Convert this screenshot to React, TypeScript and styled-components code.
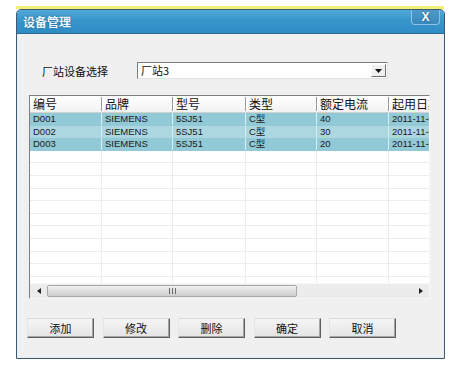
import styled, { createGlobalStyle } from 'styled-components'

const CJK = '"Noto Sans CJK SC", "Liberation Sans", sans-serif'
const LATIN = '"Liberation Sans", "Noto Sans CJK SC", sans-serif'

const GlobalStyle = createGlobalStyle`
  body {
    margin: 0;
    background: #fff;
    font-family: ${LATIN};
  }
`

const Page = styled.div`
  width: 462px;
  height: 369px;
  box-sizing: border-box;
  padding: 6px 0 0 16px;
`

const Highlight = styled.div`
  width: 428px;
  height: 3px;
  background: #f3f175;
`

const Window = styled.div`
  width: 429px;
  height: 350px;
  box-sizing: border-box;
  border: 1px solid #3f5a70;
  border-radius: 5px 5px 0 0;
  background: #f0f0f0;
  display: flex;
  flex-direction: column;
  overflow: hidden;
`

const TitleBar = styled.div`
  height: 23px;
  flex: none;
  display: flex;
  align-items: flex-start;
  justify-content: space-between;
  padding: 0 4px 0 6px;
  background: linear-gradient(180deg, #52a8d9 0%, #3896cc 45%, #2f8cc5 100%);
  border-bottom: 1px solid #2a6a94;
`

const Title = styled.span`
  font-family: ${CJK};
  font-size: 12px;
  font-weight: bold;
  line-height: 23px;
  color: #eef7fd;
  text-shadow: 0 0 2px #1d5f8a;
`

const CloseButton = styled.div`
  width: 29px;
  height: 15px;
  box-sizing: border-box;
  border: 1px solid #8cc3e4;
  border-top: none;
  border-radius: 0 0 4px 4px;
  background: linear-gradient(180deg, #4d9bcb, #3a88bb);
  color: #fff;
  font-family: ${LATIN};
  font-weight: bold;
  font-size: 12px;
  line-height: 14px;
  text-align: center;
  text-shadow: 0 0 2px #1c4f73;
`

const Body = styled.div`
  flex: 1;
  display: flex;
  flex-direction: column;
  border: 1px solid #e4eef5;
  border-top: none;
`

const FilterRow = styled.div`
  display: flex;
  align-items: center;
  padding: 28px 0 0 24px;
`

const FilterLabel = styled.span`
  font-family: ${CJK};
  font-size: 11px;
  width: 95px;
  color: #111;
`

const Combo = styled.div`
  width: 251px;
  height: 17px;
  box-sizing: border-box;
  display: flex;
  align-items: stretch;
  background: #fff;
  border: 1px solid;
  border-color: #7c7c7c #e2e2e2 #e2e2e2 #7c7c7c;
`

const ComboText = styled.span`
  flex: 1;
  font-family: ${CJK};
  font-size: 11px;
  line-height: 15px;
  padding-left: 3px;
  color: #111;
`

const ComboButton = styled.div`
  width: 15px;
  box-sizing: border-box;
  margin: 1px;
  display: flex;
  align-items: center;
  justify-content: center;
  background: #f0f0f0;
  border: 1px solid;
  border-color: #fff #6d6d6d #6d6d6d #fff;
`

const Table = styled.div`
  margin: 16px 0 0 11px;
  width: 401px;
  height: 204px;
  box-sizing: border-box;
  border: 1px solid;
  border-color: #7e7e7e #f8f8f8 #f8f8f8 #7e7e7e;
  display: flex;
  flex-direction: column;
  overflow: hidden;
  background: #fff;
`

const GridRow = styled.div<{ $bg?: string; $height: number }>`
  display: grid;
  grid-template-columns: 72px 71px 73px 71px 72px 72px;
  height: ${(p) => p.$height}px;
  flex: none;
  background: ${(p) => p.$bg || '#fff'};
  border-bottom: 1px solid ${(p) => (p.$bg ? p.$bg : '#ececec')};
  box-sizing: border-box;
`

const HeaderRow = styled(GridRow)`
  background: linear-gradient(180deg, #ffffff, #f2f2f2);
  border-bottom: 1px solid #d2d2d2;
`

const HeaderCell = styled.div`
  font-family: ${CJK};
  font-size: 12px;
  line-height: 14px;
  padding-left: 3px;
  color: #111;
  white-space: nowrap;
  border-right: 1px solid #9a9a9a;
  box-shadow: 1px 0 0 #fff;
  margin: 1px 0;
`

const Cell = styled.div<{ $line: string }>`
  font-family: ${LATIN}, ${CJK};
  font-size: 9.5px;
  line-height: 12px;
  padding-left: 3px;
  color: #1a1a1a;
  white-space: nowrap;
  overflow: hidden;
  border-right: 1px solid ${(p) => p.$line};
`

const RowsArea = styled.div`
  flex: 1;
  overflow: hidden;
  display: flex;
  flex-direction: column;
`

const ScrollBar = styled.div`
  height: 14px;
  flex: none;
  display: flex;
  align-items: center;
  background: #ececec;
  border-top: 1px solid #f8f8f8;
`

const ScrollArrow = styled.div`
  width: 17px;
  height: 14px;
  display: flex;
  align-items: center;
  justify-content: center;
`

const Thumb = styled.div`
  width: 250px;
  height: 12px;
  box-sizing: border-box;
  border: 1px solid #a9a9a9;
  border-radius: 2px;
  background: linear-gradient(180deg, #f0f0f0 0%, #dedede 50%, #cdcdcd 100%);
  display: flex;
  align-items: center;
  justify-content: center;
`

const Track = styled.div`
  flex: 1;
`

const ButtonRow = styled.div`
  display: flex;
  gap: 8.5px;
  padding: 19px 0 0 9px;
`

const Button = styled.button`
  width: 67px;
  height: 20px;
  padding: 0;
  box-sizing: border-box;
  font-family: ${CJK};
  font-size: 11px;
  color: #111;
  background: linear-gradient(180deg, #f5f5f5, #e4e4e4);
  border: 1px solid;
  border-color: #dadada #5f5f5f #5f5f5f #e6e6e6;
  box-shadow: inset -1px -1px 0 #a5a5a5;
`

const columns = ['编号', '品牌', '型号', '类型', '额定电流', '起用日期']

const records = [
  ['D001', 'SIEMENS', '5SJ51', 'C型', '40', '2011-11-01'],
  ['D002', 'SIEMENS', '5SJ51', 'C型', '30', '2011-11-01'],
  ['D003', 'SIEMENS', '5SJ51', 'C型', '20', '2011-11-01'],
]

const rowColors = ['#92c9d6', '#acd7e1', '#92c9d6']

const emptyRows = Array.from({ length: 12 }, (_, i) => i)

const buttons = ['添加', '修改', '删除', '确定', '取消']

export default function App() {
  return (
    <Page>
      <GlobalStyle />
      <Highlight />
      <Window>
        <TitleBar>
          <Title>设备管理</Title>
          <CloseButton>X</CloseButton>
        </TitleBar>
        <Body>
          <FilterRow>
            <FilterLabel>厂站设备选择</FilterLabel>
            <Combo>
              <ComboText>厂站3</ComboText>
              <ComboButton>
                <svg width="7" height="4" viewBox="0 0 7 4">
                  <path d="M0 0h7L3.5 4z" fill="#111" />
                </svg>
              </ComboButton>
            </Combo>
          </FilterRow>

          <Table>
            <HeaderRow $height={17}>
              {columns.map((c) => (
                <HeaderCell key={c}>{c}</HeaderCell>
              ))}
            </HeaderRow>
            <RowsArea>
              {records.map((r, i) => (
                <GridRow key={r[0]} $height={12.6} $bg={rowColors[i]}>
                  {r.map((v, j) => (
                    <Cell key={j} $line="#d9eef3">
                      {v}
                    </Cell>
                  ))}
                </GridRow>
              ))}
              {emptyRows.map((i) => (
                <GridRow key={i} $height={12.6}>
                  {columns.map((c) => (
                    <Cell key={c} $line="#ececec" />
                  ))}
                </GridRow>
              ))}
            </RowsArea>
            <ScrollBar>
              <ScrollArrow>
                <svg width="4" height="6" viewBox="0 0 4 6">
                  <path d="M4 0v6L0 3z" fill="#222" />
                </svg>
              </ScrollArrow>
              <Thumb>
                <svg width="7" height="6" viewBox="0 0 7 6">
                  <path d="M0.5 0v6M3.5 0v6M6.5 0v6" stroke="#6a6a6a" strokeWidth="1" />
                </svg>
              </Thumb>
              <Track />
              <ScrollArrow>
                <svg width="4" height="6" viewBox="0 0 4 6">
                  <path d="M0 0v6L4 3z" fill="#222" />
                </svg>
              </ScrollArrow>
            </ScrollBar>
          </Table>

          <ButtonRow>
            {buttons.map((b) => (
              <Button key={b}>{b}</Button>
            ))}
          </ButtonRow>
        </Body>
      </Window>
    </Page>
  )
}
